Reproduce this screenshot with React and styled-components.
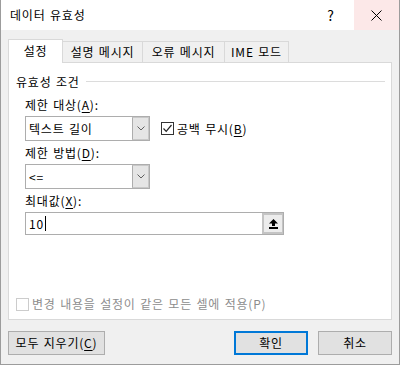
import React from 'react';
import styled, { createGlobalStyle } from 'styled-components';

const GlobalStyle = createGlobalStyle`
  html, body {
    margin: 0;
    padding: 0;
    background: #ffffff;
  }
  body {
    font-family: "Noto Sans CJK KR", "Noto Sans", sans-serif;
    font-size: 12px;
    letter-spacing: 0.8px;
    word-spacing: 1px;
    color: #000000;
  }
  * {
    box-sizing: border-box;
  }
`;

const Window = styled.div`
  width: 400px;
  height: 365px;
  display: flex;
  flex-direction: column;
  background: #f0f0f0;
  border: 1px solid #9c9c9c;
  border-top: none;
`;

const TitleBar = styled.div`
  height: 30px;
  display: flex;
  align-items: stretch;
  background: #ffffff;
`;

const Title = styled.div`
  flex: 1;
  display: flex;
  align-items: center;
  padding-left: 9px;
  line-height: 14px;
`;

const CaptionButton = styled.div`
  width: ${({ wide }) => (wide ? 45 : 46)}px;
  display: flex;
  align-items: center;
  justify-content: center;
  background: ${({ hot }) => (hot ? '#fce8e8' : 'transparent')};
  font-size: 14px;
`;

const Body = styled.div`
  flex: 1;
  display: flex;
  flex-direction: column;
  padding: 0 7px 0 7px;
`;

const TabRow = styled.div`
  margin-top: 9px;
  height: 23px;
  display: flex;
  align-items: flex-end;
  position: relative;
  z-index: 1;
`;

const Tab = styled.div`
  width: ${({ w }) => w}px;
  height: ${({ active }) => (active ? 24 : 21)}px;
  margin-bottom: ${({ active }) => (active ? -1 : 0)}px;
  display: flex;
  align-items: center;
  justify-content: center;
  padding-bottom: ${({ active }) => (active ? 2 : 0)}px;
  background: ${({ active }) => (active ? '#ffffff' : '#f0f0f0')};
  border: 1px solid #d9d9d9;
  border-bottom: none;
  border-left: ${({ first }) => (first ? '1px solid #d9d9d9' : 'none')};
  line-height: 14px;
`;

const Panel = styled.div`
  height: 258px;
  display: flex;
  flex-direction: column;
  padding: 12px 6px 8px 7px;
  background: #ffffff;
  border: 1px solid #d9d9d9;
`;

const GroupHeader = styled.div`
  height: 14px;
  display: flex;
  align-items: center;
  line-height: 14px;
  &::after {
    content: '';
    flex: 1;
    height: 1px;
    margin: 0 0 1px 6px;
    background: #dcdcdc;
  }
`;

const Label = styled.div`
  height: 14px;
  line-height: 14px;
  margin: ${({ first }) => (first ? 9 : 5)}px 0 4px 9px;
`;

const Key = styled.span`
  text-decoration: underline;
  text-underline-offset: 2px;
`;

const Row = styled.div`
  display: flex;
  align-items: center;
  margin-left: 9px;
`;

const Combo = styled.div`
  width: 125px;
  height: 25px;
  display: flex;
  background: #ffffff;
  border: 1px solid #adadad;
`;

const ComboText = styled.div`
  flex: 1;
  display: flex;
  align-items: center;
  padding-left: 3px;
  line-height: 14px;
`;

const DropButton = styled.div`
  width: 17px;
  display: flex;
  align-items: center;
  justify-content: center;
  background: #e5e5e5;
  border: 1px solid #c8c8c8;
  border-left: 1px solid #adadad;
`;

const CheckLabel = styled.label`
  display: flex;
  align-items: center;
  gap: 3px;
  margin-left: ${({ indent }) => indent}px;
  line-height: 14px;
  color: ${({ disabled }) => (disabled ? '#8d8d8d' : '#000000')};
`;

const Box = styled.span`
  width: 13px;
  height: 13px;
  display: flex;
  align-items: center;
  justify-content: center;
  background: #ffffff;
  border: 1px solid ${({ disabled }) => (disabled ? '#cccccc' : '#333333')};
`;

const TextInput = styled.div`
  width: 259px;
  height: 23px;
  display: flex;
  background: #ffffff;
  border: 1px solid #adadad;
`;

const InputText = styled.div`
  flex: 1;
  display: flex;
  align-items: center;
  padding-left: 3px;
  line-height: 14px;
`;

const Caret = styled.span`
  width: 1px;
  height: 15px;
  margin-left: 1px;
  background: #000000;
`;

const CollapseButton = styled.div`
  width: 21px;
  display: flex;
  align-items: center;
  justify-content: center;
  background: #ececec;
  border: 2px solid #c4c4c4;
  border-right-width: 1px;
`;

const Spacer = styled.div`
  flex: 1;
`;

const ButtonRow = styled.div`
  margin-top: 11px;
  display: flex;
  gap: 10px;
`;

const Button = styled.div`
  width: ${({ w }) => w}px;
  height: 24px;
  display: flex;
  align-items: center;
  justify-content: center;
  background: #e1e1e1;
  border: ${({ primary }) => (primary ? '2px solid #0078d7' : '1px solid #adadad')};
  line-height: 14px;
  margin-left: ${({ push }) => (push ? 'auto' : '0')};
`;

const Chevron = () => (
  <svg width="8" height="5" viewBox="0 0 8 5">
    <polyline points="0.5,0.5 4,4 7.5,0.5" fill="none" stroke="#606060" strokeWidth="1" />
  </svg>
);

const CheckMark = () => (
  <svg width="11" height="11" viewBox="0 0 11 11">
    <polyline points="1.5,5.5 4.2,8.3 9.5,2" fill="none" stroke="#222222" strokeWidth="1.2" />
  </svg>
);

const CollapseIcon = () => (
  <svg width="9" height="10" viewBox="0 0 9 10">
    <polygon points="4.5,0 9,4.5 6,4.5 6,7 3,7 3,4.5 0,4.5" fill="#000000" />
    <rect x="0" y="8" width="9" height="2" fill="#000000" />
  </svg>
);

const CloseIcon = () => (
  <svg width="11" height="11" viewBox="0 0 11 11">
    <path d="M0.5 0.5 L10.5 10.5 M10.5 0.5 L0.5 10.5" stroke="#000000" strokeWidth="1" />
  </svg>
);

const tabs = [
  { label: '설정', w: 55, active: true },
  { label: '설명 메시지', w: 80 },
  { label: '오류 메시지', w: 82 },
  { label: 'IME 모드', w: 64 }
];

export default function App() {
  return (
    <>
      <GlobalStyle />
      <Window>
        <TitleBar>
          <Title>데이터 유효성</Title>
          <CaptionButton>?</CaptionButton>
          <CaptionButton wide hot>
            <CloseIcon />
          </CaptionButton>
        </TitleBar>
        <Body>
          <TabRow>
            {tabs.map((t, i) => (
              <Tab key={t.label} w={t.w} active={t.active} first={i === 0}>
                {t.label}
              </Tab>
            ))}
          </TabRow>
          <Panel>
            <GroupHeader>유효성 조건</GroupHeader>
            <Label first>
              제한 대상(<Key>A</Key>):
            </Label>
            <Row>
              <Combo>
                <ComboText>텍스트 길이</ComboText>
                <DropButton>
                  <Chevron />
                </DropButton>
              </Combo>
              <CheckLabel indent={11}>
                <Box>
                  <CheckMark />
                </Box>
                <span>
                  공백 무시(<Key>B</Key>)
                </span>
              </CheckLabel>
            </Row>
            <Label>
              제한 방법(<Key>D</Key>):
            </Label>
            <Row>
              <Combo>
                <ComboText>&lt;=</ComboText>
                <DropButton>
                  <Chevron />
                </DropButton>
              </Combo>
            </Row>
            <Label>
              최대값(<Key>X</Key>):
            </Label>
            <Row>
              <TextInput>
                <InputText>
                  10
                  <Caret />
                </InputText>
                <CollapseButton>
                  <CollapseIcon />
                </CollapseButton>
              </TextInput>
            </Row>
            <Spacer />
            <CheckLabel disabled indent={0}>
              <Box disabled />
              <span>변경 내용을 설정이 같은 모든 셀에 적용(P)</span>
            </CheckLabel>
          </Panel>
          <ButtonRow>
            <Button w={97}>
              <span>
                모두 지우기(<Key>C</Key>)
              </span>
            </Button>
            <Button w={74} primary push>
              확인
            </Button>
            <Button w={74}>취소</Button>
          </ButtonRow>
        </Body>
      </Window>
    </>
  );
}
